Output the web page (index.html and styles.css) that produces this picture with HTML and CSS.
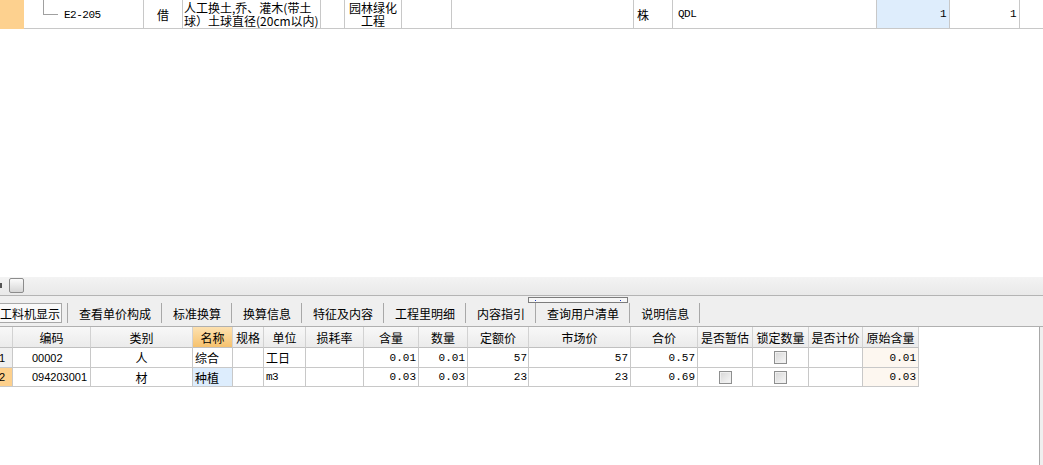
FILE: index.html
```html
<!DOCTYPE html>
<html lang="zh-CN">
<head>
<meta charset="utf-8">
<title>工料机显示</title>
<link rel="stylesheet" href="styles.css">
</head>
<body>
<div class="page">
  <div class="toprow">
    <div class="c c0"></div>
    <div class="c c1"><span class="tree"></span><span class="code">E2-205</span></div>
    <div class="c c2">借</div>
    <div class="c c3"><span class="txt">人工换土,乔、灌木(带土<br>球）土球直径(20cm以内)</span></div>
    <div class="c c4"></div>
    <div class="c c5"><span class="txt">园林绿化<br>工程</span></div>
    <div class="c c6"></div>
    <div class="c c7"></div>
    <div class="c c8">株</div>
    <div class="c c9"><span class="mono">QDL</span></div>
    <div class="c c10"><span class="mono">1</span></div>
    <div class="c c11"><span class="mono">1</span></div>
    <div class="c c12"></div>
  </div>
  <div class="blank"></div>
  <div class="hscroll"><span class="arrow"></span><span class="thumb"></span></div>
  <div class="tabs">
    <div class="tab active"><span class="box">工料机显示</span></div>
    <div class="tab">查看单价构成</div>
    <div class="tab">标准换算</div>
    <div class="tab">换算信息</div>
    <div class="tab">特征及内容</div>
    <div class="tab">工程里明细</div>
    <div class="tab">内容指引</div>
    <div class="tab">查询用户清单</div>
    <div class="tab">说明信息</div>
    <div class="grip"></div>
  </div>
  <div class="gridwrap">
    <div class="grid">
      <div class="g h"></div>
      <div class="g h">编码</div>
      <div class="g h">类别</div>
      <div class="g h sel">名称</div>
      <div class="g h top">规格</div>
      <div class="g h">单位</div>
      <div class="g h">损耗率</div>
      <div class="g h">含量</div>
      <div class="g h">数量</div>
      <div class="g h">定额价</div>
      <div class="g h">市场价</div>
      <div class="g h">合价</div>
      <div class="g h">是否暂估</div>
      <div class="g h">锁定数量</div>
      <div class="g h">是否计价</div>
      <div class="g h">原始含量</div>

      <div class="g rn">1</div>
      <div class="g code-c">00002</div>
      <div class="g ctr">人</div>
      <div class="g l">综合</div>
      <div class="g"></div>
      <div class="g l">工日</div>
      <div class="g"></div>
      <div class="g r">0.01</div>
      <div class="g r">0.01</div>
      <div class="g r r1">57</div>
      <div class="g r">57</div>
      <div class="g r">0.57</div>
      <div class="g ctr"></div>
      <div class="g ctr"><span class="cb"></span></div>
      <div class="g"></div>
      <div class="g r peach">0.01</div>

      <div class="g rn cur">2</div>
      <div class="g code-c">094203001</div>
      <div class="g ctr">材</div>
      <div class="g l blue">种植</div>
      <div class="g"></div>
      <div class="g l"><span class="mono">m3</span></div>
      <div class="g"></div>
      <div class="g r">0.03</div>
      <div class="g r">0.03</div>
      <div class="g r r1">23</div>
      <div class="g r">23</div>
      <div class="g r">0.69</div>
      <div class="g ctr"><span class="cb"></span></div>
      <div class="g ctr"><span class="cb"></span></div>
      <div class="g"></div>
      <div class="g r peach">0.03</div>
    </div>
  </div>
</div>
</body>
</html>
```

FILE: styles.css
```css
body {
  margin: 0;
  font-family: "Noto Sans CJK SC", "Liberation Sans", sans-serif;
  font-size: 12px;
  color: #000;
}

.page {
  width: 1043px;
  height: 465px;
  display: flex;
  flex-direction: column;
  overflow: hidden;
  background: #efefef;
}

.mono {
  font-family: "Liberation Mono", monospace;
  font-size: 11px;
  letter-spacing: -0.5px;
}

/* top row of the upper grid */
.toprow {
  display: flex;
  height: 29px;
  flex: none;
  background: #fff;
}

.c {
  box-sizing: border-box;
  height: 29px;
  flex: none;
  display: flex;
  align-items: center;
  border-right: 1px solid #c8c8c8;
  border-bottom: 1px solid #c8c8c8;
  white-space: nowrap;
}

.c0 { width: 24px; background: #fdd18f; border: none; }
.c1 { width: 120px; padding-left: 19px; align-items: flex-start; }
.tree {
  width: 15px;
  height: 15px;
  box-sizing: border-box;
  border-left: 1px solid #a0a0a0;
  border-bottom: 1px solid #a0a0a0;
}
.code {
  align-self: center;
  margin-left: 6px;
  margin-top: 2px;
  font-family: "Liberation Mono", monospace;
  font-size: 11px;
  letter-spacing: -0.5px;
}
.c2 { width: 39px; justify-content: center; }
.c3 { width: 138px; padding-left: 1px; }
.c3 .txt, .c5 .txt { line-height: 13px; }
.c4 { width: 24px; }
.c5 { width: 57px; justify-content: center; text-align: center; }
.c6 { width: 50px; }
.c7 { width: 182px; }
.c8 { width: 39px; padding-left: 3px; }
.c9 { width: 204px; padding-left: 5px; }
.c10 { width: 73px; justify-content: flex-end; padding-right: 3px; background: #deedfc; }
.c11 { width: 70px; justify-content: flex-end; padding-right: 3px; }
.c12 { flex: 1; border-right: none; }

.blank {
  height: 248px;
  flex: none;
  background: #fff;
}

/* horizontal scrollbar */
.hscroll {
  height: 18px;
  flex: none;
  display: flex;
  align-items: flex-start;
  background: linear-gradient(#f3f3f3, #e9e9e9);
  border-bottom: 1px solid #b4b4b4;
}
.arrow {
  width: 2px;
  height: 5px;
  margin-top: 6px;
  background: #555;
}
.thumb {
  width: 15px;
  height: 15px;
  margin-top: 1px;
  margin-left: 7px;
  box-sizing: border-box;
  border: 1px solid #8c8c8c;
  border-radius: 2px;
  background: linear-gradient(#fbfbfb, #d6d6d6);
}

/* tab strip */
.tabs {
  position: relative;
  height: 31px;
  box-sizing: border-box;
  flex: none;
  display: flex;
  align-items: flex-start;
  padding-top: 7px;
  background: #efefef;
  border-bottom: 1px solid #b0b0b0;
}
.tab {
  height: 20px;
  display: flex;
  align-items: center;
  padding: 0 10px 0 11px;
  border-right: 1px solid #a8a8a8;
  white-space: nowrap;
}
.tab.active {
  margin-left: -3px;
  padding: 0 5px 0 0;
}
.tab .box {
  height: 20px;
  box-sizing: border-box;
  display: flex;
  align-items: center;
  padding: 0 1px 0 2px;
  border: 1px solid #a8a8a8;
  background: #f9f9f9;
}
.grip {
  position: absolute;
  left: 528px;
  top: 1px;
  width: 100px;
  height: 6px;
  box-sizing: border-box;
  border: 1px solid #7c7c7c;
  background: #f7f7f7;
}
.grip::before,
.grip::after {
  content: "";
  position: absolute;
  top: 2px;
  width: 1px;
  height: 1px;
  background: #1a3cc8;
}
.grip::before { left: 6px; }
.grip::after { right: 6px; }

/* lower grid */
.gridwrap {
  flex: 1;
  width: 1040px;
  box-sizing: border-box;
  background: #fff;
  border-right: 1px solid #a8a8a8;
}
.grid {
  display: grid;
  grid-template-columns: 13px 78px 102px 40px 31px 42px 58px 55px 49px 61px 102px 67px 55px 56px 54px 56px;
  grid-template-rows: 21px 20px 19px;
  width: 919px;
}
.g {
  box-sizing: border-box;
  display: flex;
  align-items: center;
  overflow: hidden;
  white-space: nowrap;
  border-right: 1px solid #c8c8c8;
  border-bottom: 1px solid #c8c8c8;
}
.h {
  justify-content: center;
  background: linear-gradient(#f8f8f8, #ebebeb);
  border-right-color: #d2d2d2;
  border-bottom-color: #c0c0c0;
}
.h.top { align-items: flex-start; padding-top: 2px; }
.h.sel { background: linear-gradient(#fde1b0, #f6c26e); }
.rn {
  justify-content: flex-end;
  padding-right: 7px;
  font-family: "Liberation Sans", sans-serif;
  font-size: 11px;
  background: #f0f0f0;
}
.rn.cur { background: #fdd08c; }
.code-c {
  padding-left: 19px;
  font-family: "Liberation Sans", sans-serif;
  font-size: 11px;
}
.ctr { justify-content: center; }
.l { padding-left: 2px; }
.r {
  justify-content: flex-end;
  padding-right: 2px;
  font-family: "Liberation Mono", monospace;
  font-size: 11px;
}
.r1 { padding-right: 1px; }
.blue { background: #ddedfd; }
.peach { background: #fdf7f0; }
.cb {
  width: 13px;
  height: 13px;
  box-sizing: border-box;
  border: 1px solid #8e8f8f;
  background: linear-gradient(135deg, #d6d6d6, #f8f8f8);
  box-shadow: inset 0 0 0 1px #efefef;
}
```
